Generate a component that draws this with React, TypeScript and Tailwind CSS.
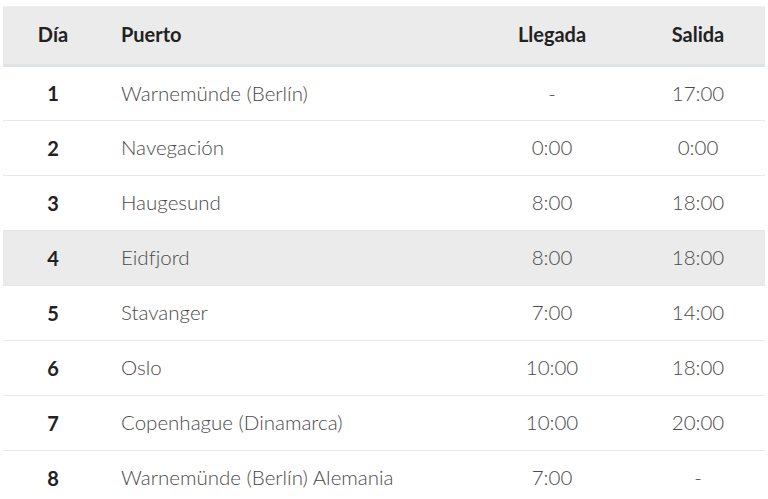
import React from 'react';

const rows = [
  { dia: '1', puerto: 'Warnemünde (Berlín)', llegada: '-', salida: '17:00' },
  { dia: '2', puerto: 'Navegación', llegada: '0:00', salida: '0:00' },
  { dia: '3', puerto: 'Haugesund', llegada: '8:00', salida: '18:00' },
  { dia: '4', puerto: 'Eidfjord', llegada: '8:00', salida: '18:00' },
  { dia: '5', puerto: 'Stavanger', llegada: '7:00', salida: '14:00' },
  { dia: '6', puerto: 'Oslo', llegada: '10:00', salida: '18:00' },
  { dia: '7', puerto: 'Copenhague (Dinamarca)', llegada: '10:00', salida: '20:00' },
  { dia: '8', puerto: 'Warnemünde (Berlín) Alemania', llegada: '7:00', salida: '-' },
];

export default function App() {
  return (
    <div
      className="h-[499px] overflow-hidden bg-white pl-[3px] pr-[3px] pt-[6px]"
      style={{ fontFamily: 'Lato, "Open Sans", sans-serif', fontVariantLigatures: 'none' }}
    >
      <table className="w-[762px] table-fixed border-collapse text-[20px]">
        <colgroup>
          <col className="w-[100px]" />
          <col className="w-[370px]" />
          <col className="w-[158px]" />
          <col className="w-[134px]" />
        </colgroup>
        <thead>
          <tr className="h-[59px] border-t border-b-[3px] border-t-[#f0f0f0] border-b-[#dfe3e7] bg-[#ebebeb] font-bold text-[#222]">
            <th className="pb-[3px] text-center">Día</th>
            <th className="pb-[3px] pl-[18px] text-left">Puerto</th>
            <th className="pb-[3px] text-center">Llegada</th>
            <th className="pb-[3px] text-center">Salida</th>
          </tr>
        </thead>
        <tbody>
          {rows.map((r, i) => (
            <tr
              key={r.dia}
              className={`h-[55px] ${i < rows.length - 1 ? 'border-b border-[#e5e8ec]' : ''} ${r.dia === '4' ? 'bg-[#ebebeb]' : ''}`}
            >
              <td className="pb-[1px] text-center font-bold text-[#222]">{r.dia}</td>
              <td className="pb-[1px] pl-[18px] text-[20.5px] font-light text-[#4a4a4a]">{r.puerto}</td>
              <td className="pb-[1px] text-center text-[20.5px] font-light text-[#4a4a4a]">{r.llegada}</td>
              <td className="pb-[1px] text-center text-[20.5px] font-light text-[#4a4a4a]">{r.salida}</td>
            </tr>
          ))}
        </tbody>
      </table>
    </div>
  );
}
